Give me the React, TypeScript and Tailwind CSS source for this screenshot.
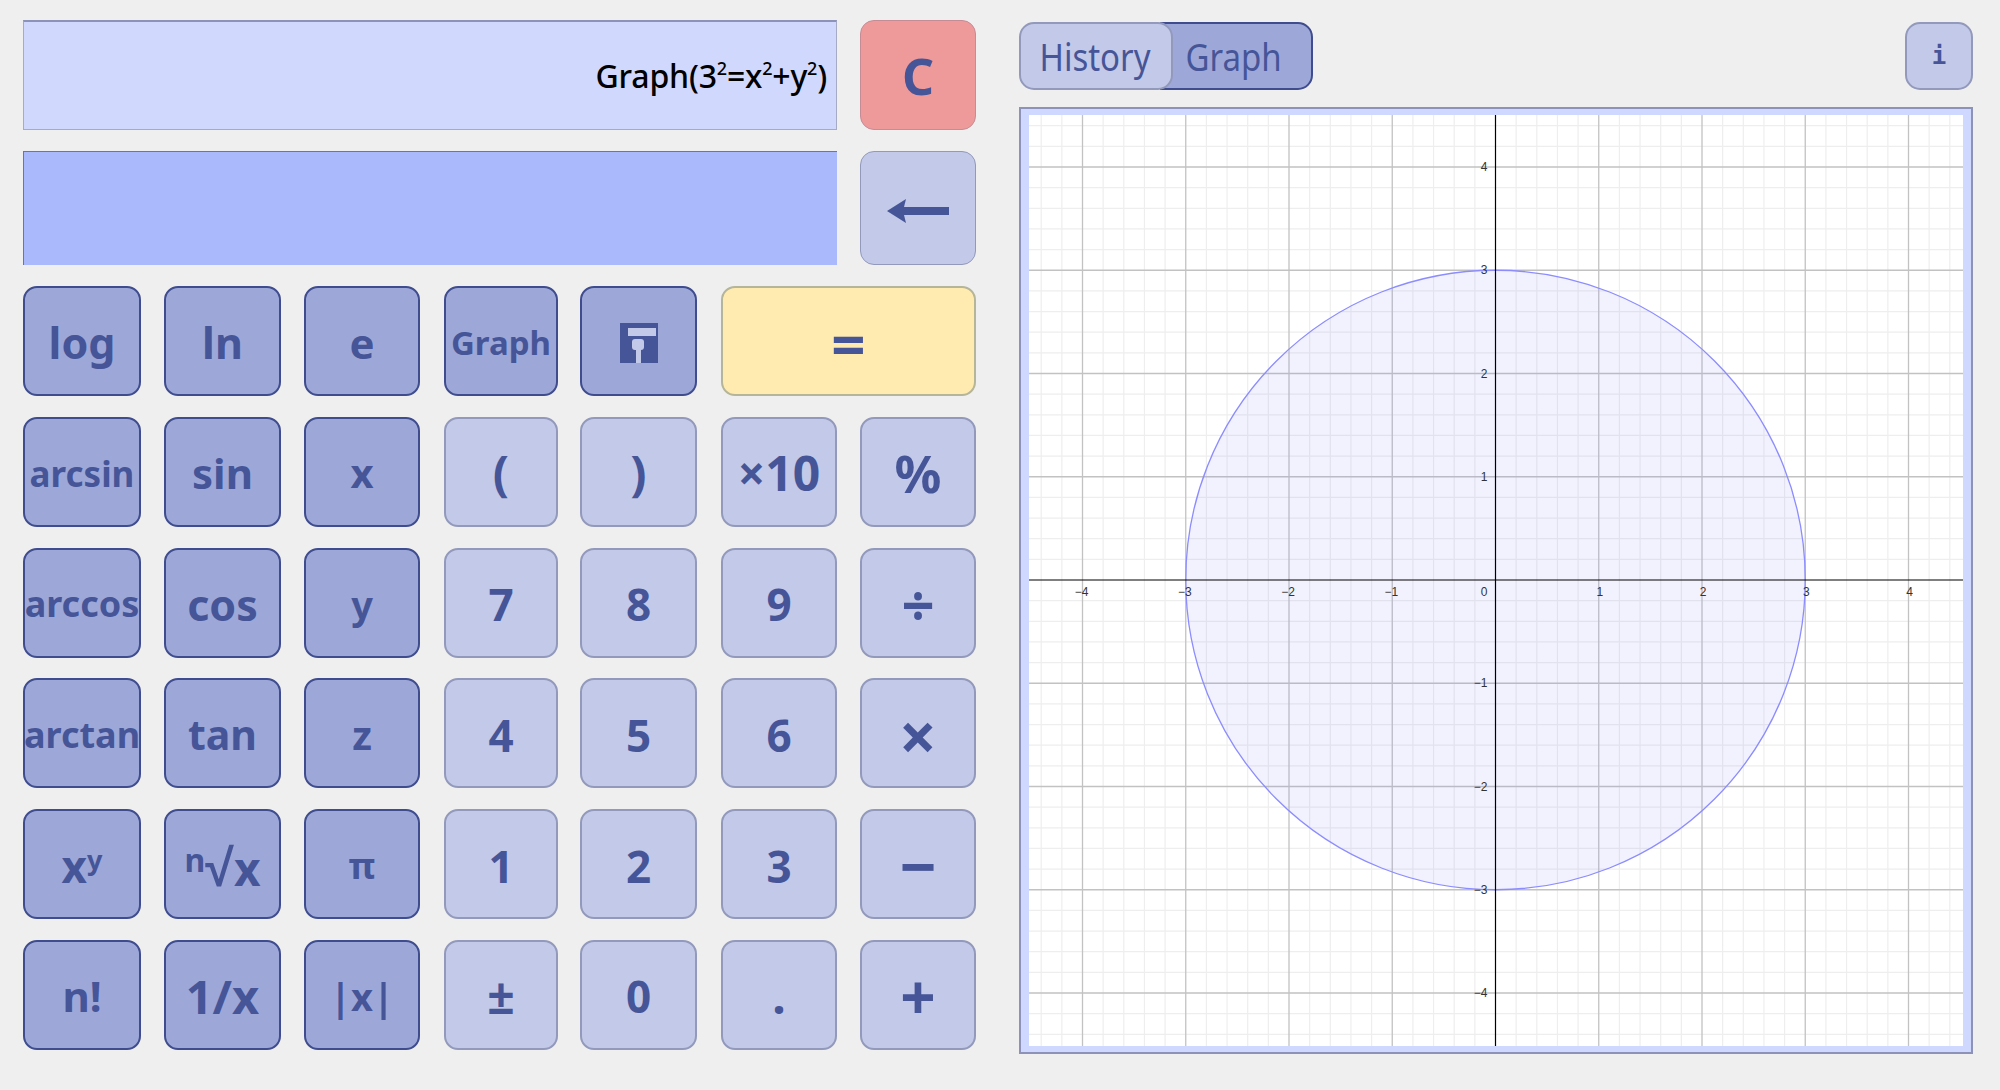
import type { ReactNode } from "react";

type Key = {
  label: ReactNode;
  tone: "dark" | "light" | "equals";
  size: string;
  span?: boolean;
};

const tones = {
  dark: "bg-[#9da8d9] border-[#3f4c8e]",
  light: "bg-[#c3c9e8] border-[#9299bb]",
  equals: "bg-[#ffeab0] border-[#b5b59a]",
};

const widths = ["w-[118px]", "w-[117px]", "w-[116px]", "w-[114px]", "w-[117px]", "w-[116px]", "w-[116px]"];

function SaveIcon() {
  return (
    <svg width="38" height="40" viewBox="0 0 38 40">
      <rect width="38" height="40" fill="#465597" />
      <rect x="8" y="5" width="28" height="8" fill="#c3c9e8" />
      <rect x="12" y="16" width="12" height="11" rx="3" fill="#c3c9e8" />
      <rect x="16" y="26" width="5" height="14" fill="#c3c9e8" />
    </svg>
  );
}

const rows: Key[][] = [
  [
    { label: "log", tone: "dark", size: "text-[43px]" },
    { label: "ln", tone: "dark", size: "text-[43px]" },
    { label: "e", tone: "dark", size: "text-[42px]" },
    { label: "Graph", tone: "dark", size: "text-[33px]" },
    { label: <SaveIcon />, tone: "dark", size: "text-[38px]" },
    { label: "=", tone: "equals", size: "text-[60px]", span: true },
  ],
  [
    { label: "arcsin", tone: "dark", size: "text-[35px]" },
    { label: "sin", tone: "dark", size: "text-[42px]" },
    { label: "x", tone: "dark", size: "text-[40px]" },
    { label: "(", tone: "light", size: "text-[48px]" },
    { label: ")", tone: "light", size: "text-[48px]" },
    { label: "×10", tone: "light", size: "text-[48px]" },
    { label: "%", tone: "light", size: "text-[52px]" },
  ],
  [
    { label: "arccos", tone: "dark", size: "text-[36px]" },
    { label: "cos", tone: "dark", size: "text-[43px]" },
    { label: "y", tone: "dark", size: "text-[38px]" },
    { label: "7", tone: "light", size: "text-[44px]" },
    { label: "8", tone: "light", size: "text-[44px]" },
    { label: "9", tone: "light", size: "text-[44px]" },
    { label: "÷", tone: "light", size: "text-[58px]" },
  ],
  [
    { label: "arctan", tone: "dark", size: "text-[36px]" },
    { label: "tan", tone: "dark", size: "text-[41px]" },
    { label: "z", tone: "dark", size: "text-[40px]" },
    { label: "4", tone: "light", size: "text-[44px]" },
    { label: "5", tone: "light", size: "text-[44px]" },
    { label: "6", tone: "light", size: "text-[44px]" },
    { label: "×", tone: "light", size: "text-[66px]" },
  ],
  [
    {
      label: (
        <span>
          x<sup className="relative -top-[13px] align-baseline text-[27px]">y</sup>
        </span>
      ),
      tone: "dark",
      size: "text-[44px]",
    },
    {
      label: (
        <span>
          <sup className="relative -top-[14px] align-baseline text-[32px]">n</sup>
          <span className="text-[52px]">√</span>x
        </span>
      ),
      tone: "dark",
      size: "text-[46px]",
    },
    { label: "π", tone: "dark", size: "text-[36px]" },
    { label: "1", tone: "light", size: "text-[44px]" },
    { label: "2", tone: "light", size: "text-[44px]" },
    { label: "3", tone: "light", size: "text-[44px]" },
    { label: "−", tone: "light", size: "text-[64px]" },
  ],
  [
    { label: "n!", tone: "dark", size: "text-[42px]" },
    { label: "1/x", tone: "dark", size: "text-[47px]" },
    { label: "|x|", tone: "dark", size: "text-[38px]" },
    { label: "±", tone: "light", size: "text-[48px]" },
    { label: "0", tone: "light", size: "text-[44px]" },
    { label: ".", tone: "light", size: "text-[48px]" },
    { label: "+", tone: "light", size: "text-[62px]" },
  ],
];

const cx = 466.5;
const cy = 465;
const unit = 103.25;
const minor = unit / 5;

function range(center: number, max: number) {
  const steps: { pos: number; n: number }[] = [];
  const start = -Math.floor(center / minor);
  const end = Math.floor((max - center) / minor);
  for (let n = start; n <= end; n++) steps.push({ pos: center + n * minor, n });
  return steps;
}

function Plot() {
  const xs = range(cx, 934);
  const ys = range(cy, 931);
  return (
    <svg width="934" height="931" viewBox="0 0 934 931" className="block bg-white">
      {xs.filter((s) => s.n % 5 !== 0).map((s) => (
        <line key={s.n} x1={s.pos} x2={s.pos} y1="0" y2="931" stroke="#eeeeee" strokeWidth="1.2" />
      ))}
      {ys.filter((s) => s.n % 5 !== 0).map((s) => (
        <line key={s.n} y1={s.pos} y2={s.pos} x1="0" x2="934" stroke="#eeeeee" strokeWidth="1.2" />
      ))}
      {xs.filter((s) => s.n % 5 === 0 && s.n !== 0).map((s) => (
        <line key={s.n} x1={s.pos} x2={s.pos} y1="0" y2="931" stroke="#c2c2c2" strokeWidth="1.3" />
      ))}
      {ys.filter((s) => s.n % 5 === 0 && s.n !== 0).map((s) => (
        <line key={s.n} y1={s.pos} y2={s.pos} x1="0" x2="934" stroke="#c2c2c2" strokeWidth="1.3" />
      ))}
      <circle cx={cx} cy={cy} r={unit * 3} fill="#8080ff" fillOpacity="0.1" stroke="#8c8cff" strokeWidth="1.3" />
      <line x1={cx} x2={cx} y1="0" y2="931" stroke="#000000" strokeWidth="1.2" />
      <line y1={cy} y2={cy} x1="0" x2="934" stroke="#000000" strokeWidth="1.2" />
      <g fontFamily="'Liberation Sans', sans-serif" fontSize="12" fill="#333333">
        {[-4, -3, -2, -1, 1, 2, 3, 4].map((n) => (
          <text key={n} x={cx + n * unit + (n < 0 ? -1 : 1)} y={cy + 16} textAnchor="middle">
            {n < 0 ? `−${-n}` : n}
          </text>
        ))}
        {[-4, -3, -2, -1, 1, 2, 3, 4].map((n) => (
          <text key={n} x={cx - 8} y={cy - n * unit + 4} textAnchor="end">
            {n < 0 ? `−${-n}` : n}
          </text>
        ))}
        <text x={cx - 8} y={cy + 16} textAnchor="end">
          0
        </text>
      </g>
    </svg>
  );
}

export default function App() {
  return (
    <div className="flex h-[1090px] gap-[43px] overflow-hidden bg-[#efefef] pl-[23px] pt-[20px] font-['Noto_Sans',sans-serif] text-[#465597]">
      <div className="w-[953px]">
        <div className="flex gap-[23px]">
          <div className="flex h-[110px] w-[814px] items-center justify-end border border-[#a5abc5] border-t-2 border-t-[#8d93b8] bg-[#d0d9fd] pr-[9px] text-[32px] font-medium tracking-[-0.2px] text-black">
            <span>
              Graph(3<sup className="-top-[13px] text-[18px]">2</sup>=x<sup className="-top-[13px] text-[18px]">2</sup>+y<sup className="-top-[13px] text-[18px]">2</sup>)
            </span>
          </div>
          <button className="flex h-[110px] w-[116px] items-center justify-center rounded-[14px] border border-[#c58c96] bg-[#ef9a9a] pt-[2px] text-[50px] font-bold">
            C
          </button>
        </div>
        <div className="mt-[21px] flex gap-[23px]">
          <div className="h-[114px] w-[814px] border-l border-t border-[#6d74a3] bg-[#aab8fc]" />
          <button className="flex h-[114px] w-[116px] items-center justify-center rounded-[14px] border border-[#9299bb] bg-[#c3c9e8] pt-[6px]">
            <svg width="62" height="24" viewBox="0 0 62 24">
              <path d="M0 12 L19 0 L17 8 H62 V16 H17 L19 24 Z" fill="#465597" />
            </svg>
          </button>
        </div>
        <div className="mt-[21px] grid grid-cols-[141px_140px_140px_136px_141px_139px_116px] auto-rows-[110px] gap-y-[20.8px]">
          {rows.map((row, r) =>
            row.map((key, c) => (
              <button
                key={`${r}-${c}`}
                className={`flex items-center justify-center overflow-visible whitespace-nowrap rounded-[14px] border-2 pt-[3px] font-bold leading-none ${key.span ? "col-span-2 w-full" : widths[c]} ${tones[key.tone]} ${key.size}`}
              >
                {key.label}
              </button>
            )),
          )}
        </div>
      </div>
      <div className="w-[954px] pt-[2px]">
        <div className="flex h-[68px] justify-between">
          <div className="flex text-[33px]">
            <button className="relative z-10 h-full w-[154px] rounded-[15px] border-2 border-[#9299bb] bg-[#c3c9e8] pl-[4px] pr-[6px] pt-[2px]">
              <span className="inline-block scale-y-[1.15]">History</span>
            </button>
            <button className="-ml-[13px] h-full w-[153px] rounded-r-[15px] border-2 border-[#3f4c8e] bg-[#9da8d9] pl-[10px] pr-[16px] pt-[2px]">
              <span className="inline-block scale-y-[1.15]">Graph</span>
            </button>
          </div>
          <button className="h-full w-[68px] rounded-[15px] border-2 border-[#9299bb] bg-[#c3c9e8] font-['DejaVu_Sans_Mono',monospace] text-[24px] font-bold">
            i
          </button>
        </div>
        <div className="mt-[17px] w-[954px] border-2 border-[#8d93b8] bg-[#cfd8ff] px-[8px] py-[6px]">
          <Plot />
        </div>
      </div>
    </div>
  );
}
